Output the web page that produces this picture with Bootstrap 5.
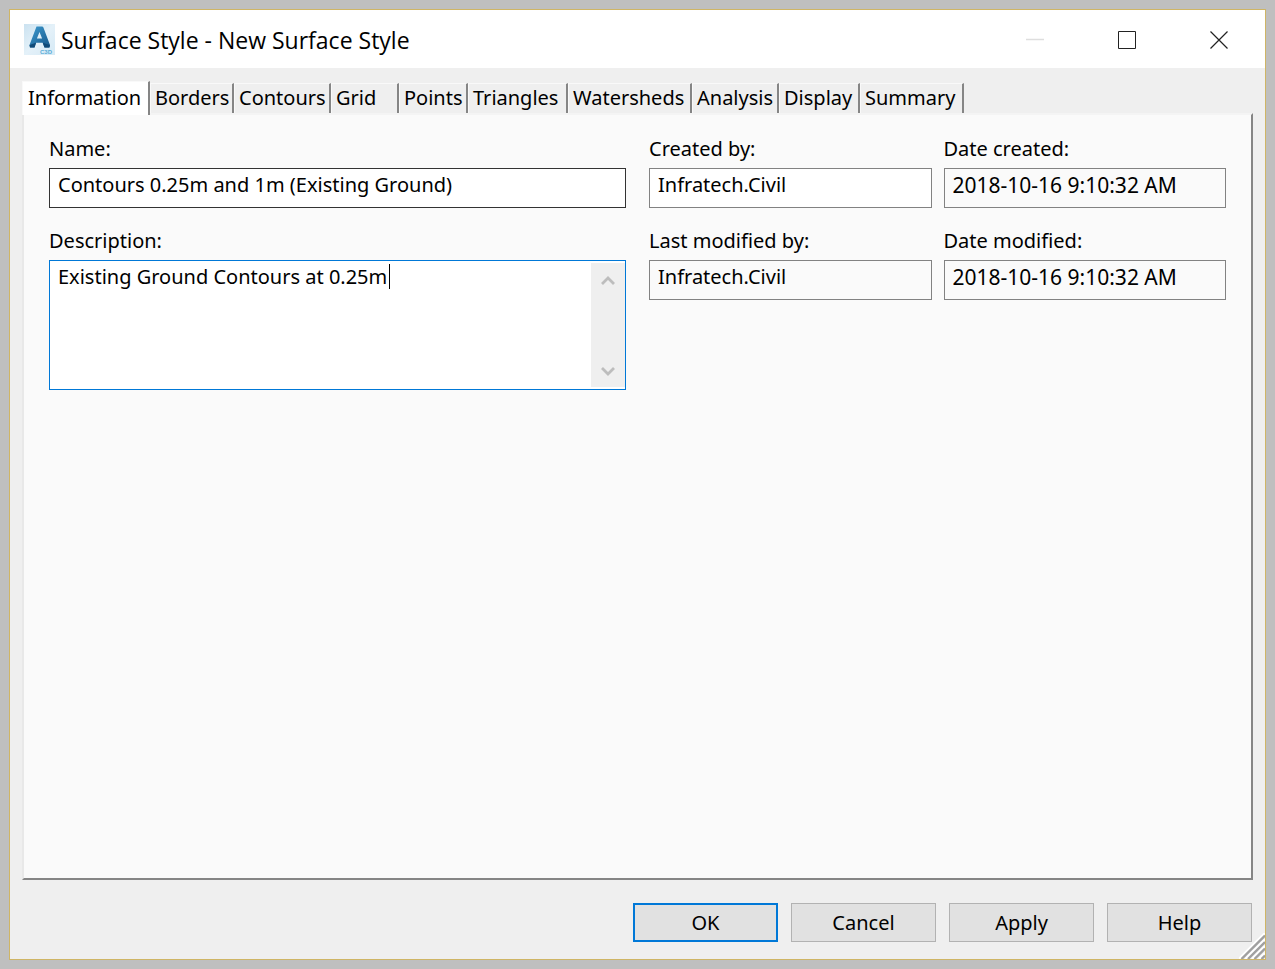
<!DOCTYPE html>
<html lang="en">
<head>
<meta charset="utf-8">
<meta name="viewport" content="width=device-width, initial-scale=1">
<title>Surface Style - New Surface Style</title>
<link href="https://cdn.jsdelivr.net/npm/bootstrap@5.3.0/dist/css/bootstrap.min.css" rel="stylesheet">
<style>
  body { background: #bfbfbf; color: #000; font-family: "Noto Sans", sans-serif; font-size: 20px; line-height: 30px; padding: 9px; }
  .dialog { background: #efefef; border: 1px solid #cfb565; min-height: calc(100vh - 18px); }
  .titlebar { background: #fff; height: 58px; padding-left: 14px; }
  .titlebar h1 { font-family: "Open Sans", sans-serif; font-size: 23px; line-height: 30px; font-weight: 400; padding: 2px 0 0 6px; }
  .caption-btn { width: 92px; height: 56px; border: 0; background: transparent; padding: 0; align-self: flex-start; }
  .dialog-body { padding: 13px 12px 0; }
  .tab-strip { display: grid; grid-template-columns: 128px 84px 97px 68px 69px 100px 124px 87px 81px 104px; height: 32px; align-items: end; }
  .tab-strip button { height: 31px; border: 0; border-top: 1px solid #f9f9f9; border-left: 1px solid #f9f9f9; border-right: 2px solid #858585; background: #efefef; color: #000; padding: 0 0 2px 4px; text-align: left; line-height: 28px; white-space: nowrap; }
  .tab-strip button.active { height: 34px; margin-bottom: -1px; background: #fff; padding-left: 5px; line-height: 30px; z-index: 1; }
  .sheet { background: #fafafa; border: 2px solid #858585; border-top-color: #f4f4f4; border-left-color: #e8e8e8; padding: 19px 25px 24px; }
  .cols-wide { --bs-gutter-x: 23px; }
  .cols-tight { --bs-gutter-x: 12px; }
  .field { margin-bottom: 18px; }
  .field label { display: block; margin-bottom: 4px; }
  .box { border: 1px solid #828282; border-radius: 0; background: #fff; color: #000; width: 100%; height: 40px; padding: 0 8px 8px; line-height: 30px; display: block; outline: 0; }
  .box.key { border-color: #333; }
  .box.locked { background: #fafafa; }
  .box.stamp { font-size: 21px; padding-bottom: 6px; }
  .memo { border: 1px solid #0078d7; background: #fff; height: 130px; }
  .memo textarea { border: 0; outline: 0; resize: none; padding: 1px 8px; line-height: 30px; color: #000; background: transparent; overflow: hidden; }
  .memo-scroll { width: 34px; margin: 2px 0 2px 1px; background: #efefef; padding: 12px 0 10px; }
  .text-caret { left: 339px; top: 3px; width: 1px; height: 25px; background: #000; }
  .actions { padding: 23px 13px 17px; gap: 13px; }
  .actions button { width: 145px; height: 39px; border: 1px solid #b2b2b2; background: #e1e1e1; color: #000; line-height: 36px; padding: 0; }
  .actions button.default { border: 2px solid #0078d7; line-height: 34px; }
  .grip { right: 0; bottom: 0; }
</style>
</head>
<body>
<main class="dialog d-flex flex-column position-relative">
  <header class="titlebar d-flex align-items-center">
    <svg width="31" height="31" viewBox="0 0 31 31" aria-hidden="true">
      <defs>
        <linearGradient id="tile" x1="0" y1="0" x2="1" y2="1"><stop offset="0" stop-color="#cbe2f0"/><stop offset=".5" stop-color="#e4f1f9"/><stop offset="1" stop-color="#d5e9f5"/></linearGradient>
        <linearGradient id="letter" x1="0" y1="0" x2="1" y2="1"><stop offset="0" stop-color="#3d9bd0"/><stop offset="1" stop-color="#16578a"/></linearGradient>
      </defs>
      <rect width="31" height="31" fill="url(#tile)"/>
      <path fill="url(#letter)" fill-rule="evenodd" d="M12.500 2.500h5.500q1 0 1.400 1L26 21l-.6 2.500H20.500l-1.800-4.800h-6.500L10.500 23.500H6l-.5-2.500ZM15.500 8 12.900 14.500h5.200Z"/>
      <path fill="#104a78" d="M5.500 21 12 18.700 10.500 23.500H6ZM20.500 23.500l-1.800-4.800L26 21l-.6 2.500Z"/>
      <text x="16" y="29.500" font-family="Liberation Sans, sans-serif" font-size="6" font-weight="700" fill="#58acd8">C3D</text>
    </svg>
    <h1 class="mb-0 me-auto">Surface Style - New Surface Style</h1>
    <button class="caption-btn" type="button" aria-label="Minimize" disabled><svg width="18" height="18" viewBox="0 0 18 18"><path d="M0 8.500h18" stroke="#dedede" stroke-width="1.500"/></svg></button>
    <button class="caption-btn" type="button" aria-label="Maximize"><svg width="18" height="18" viewBox="0 0 18 18"><path d="M.5.5h17v17H.5Z" fill="none" stroke="#222"/></svg></button>
    <button class="caption-btn" type="button" aria-label="Close"><svg width="18" height="18" viewBox="0 0 18 18"><path d="m.5.5 17 17m0-17-17 17" stroke="#222" stroke-width="1.200"/></svg></button>
  </header>

  <div class="dialog-body d-flex flex-column flex-grow-1">
    <div class="tab-strip" role="tablist">
      <button class="active" type="button" role="tab" aria-selected="true">Information</button>
      <button type="button" role="tab">Borders</button>
      <button type="button" role="tab">Contours</button>
      <button type="button" role="tab">Grid</button>
      <button type="button" role="tab">Points</button>
      <button type="button" role="tab">Triangles</button>
      <button type="button" role="tab">Watersheds</button>
      <button type="button" role="tab">Analysis</button>
      <button type="button" role="tab">Display</button>
      <button type="button" role="tab">Summary</button>
    </div>

    <section class="sheet flex-grow-1">
      <div class="row cols-wide">
        <div class="col-6">
          <div class="field">
            <label for="name">Name:</label>
            <input class="box key" id="name" type="text" value="Contours 0.25m and 1m (Existing Ground)">
          </div>
          <div class="field">
            <label for="description">Description:</label>
            <div class="memo d-flex position-relative">
              <textarea class="flex-grow-1" id="description">Existing Ground Contours at 0.25m</textarea>
              <span class="text-caret position-absolute"></span>
              <div class="memo-scroll d-flex flex-column justify-content-between align-items-center">
                <svg width="14" height="12" viewBox="0 0 14 12" aria-hidden="true"><path d="m1 9 6-6 6 6" fill="none" stroke="#bdbdbd" stroke-width="2.800"/></svg>
                <svg width="14" height="12" viewBox="0 0 14 12" aria-hidden="true"><path d="m1 3 6 6 6-6" fill="none" stroke="#bdbdbd" stroke-width="2.800"/></svg>
              </div>
            </div>
          </div>
        </div>
        <div class="col-6">
          <div class="row cols-tight">
            <div class="col-6 field">
              <label for="created-by">Created by:</label>
              <input class="box" id="created-by" type="text" value="Infratech.Civil">
            </div>
            <div class="col-6 field">
              <label for="created">Date created:</label>
              <input class="box locked stamp" id="created" type="text" value="2018-10-16 9:10:32 AM" readonly>
            </div>
            <div class="col-6 field">
              <label for="modified-by">Last modified by:</label>
              <input class="box locked" id="modified-by" type="text" value="Infratech.Civil" readonly>
            </div>
            <div class="col-6 field">
              <label for="modified">Date modified:</label>
              <input class="box locked stamp" id="modified" type="text" value="2018-10-16 9:10:32 AM" readonly>
            </div>
          </div>
        </div>
      </div>
    </section>
  </div>

  <footer class="actions d-flex justify-content-end">
    <button class="default" type="submit">OK</button>
    <button type="button">Cancel</button>
    <button type="button">Apply</button>
    <button type="button">Help</button>
  </footer>
  <svg class="grip position-absolute" width="26" height="26" viewBox="0 0 26 26" aria-hidden="true">
    <path d="M0 26 26 0M6.500 26 26 6.500M13 26 26 13M20 26l6-6" stroke="#fff" stroke-width="2.400"/>
    <path d="M2.500 26 26 2.500M9 26 26 9M15.500 26 26 15.500M22.500 26l3.500-3.500" stroke="#a0a0a0" stroke-width="2.400"/>
  </svg>
</main>
<script src="https://cdn.jsdelivr.net/npm/bootstrap@5.3.0/dist/js/bootstrap.bundle.min.js"></script>
</body>
</html>
